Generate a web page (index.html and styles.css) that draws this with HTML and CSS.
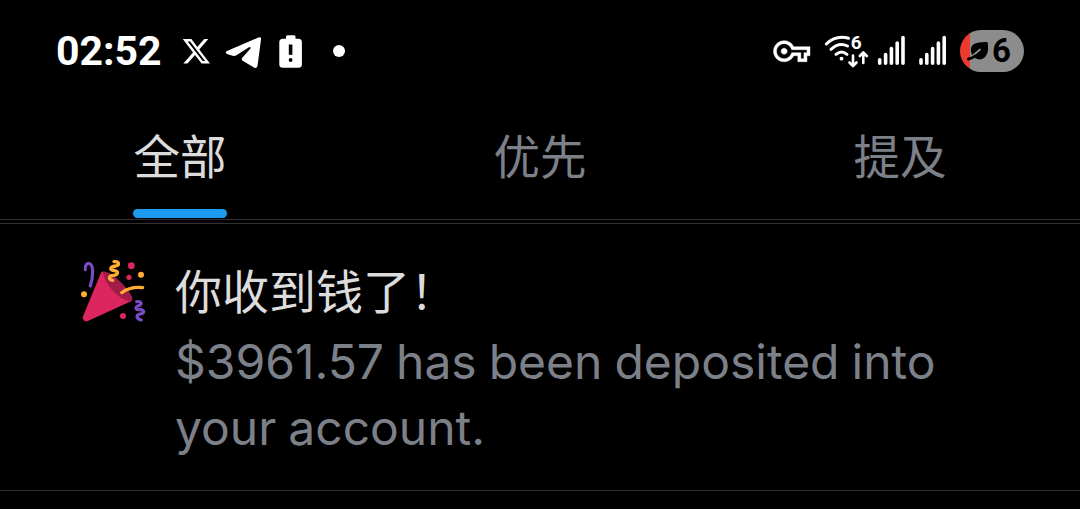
FILE: index.html
```html
<!DOCTYPE html>
<html lang="zh-CN">
<head>
<meta charset="utf-8">
<title>通知</title>
<link rel="stylesheet" href="styles.css">
</head>
<body>
<header class="status">
  <span class="clock">02:52</span>
  <svg width="56" height="60" viewBox="162 20 56 60" fill="#fff"><path transform="translate(181.2 36.2) scale(1.26)" d="M18.244 2.25h3.308l-7.227 8.26 8.502 11.24H16.17l-5.214-6.817L4.99 21.75H1.68l7.73-8.835L1.254 2.25H8.08l4.713 6.231zm-1.161 17.52h1.833L7.084 4.126H5.117z"/></svg>
  <svg width="52" height="60" viewBox="218 20 52 60" fill="#fff"><path d="M227 51 259 37.3Q261.5 36.8 261 39.5L257.5 66Q256.5 69 254 67.5L243 61Q240.8 59.5 242.5 57.5L250.5 48.5Q251 46.5 249 47.3L236 55.5Q234 56.5 231 55.3L227 54Q224.5 52.5 227 51Z"/></svg>
  <svg width="50" height="60" viewBox="270 20 50 60"><rect x="286" y="35.3" width="9.5" height="7" rx="1.5" fill="#fff"/><rect x="279.3" y="38.7" width="22.6" height="29" rx="3.5" fill="#fff"/><path d="M288.8 44.5h3.6v10.3h-3.6z"/><circle cx="290.6" cy="60" r="1.9"/></svg>
  <svg width="40" height="60" viewBox="320 20 40 60" fill="#fff"><circle cx="339" cy="51" r="6"/></svg>
  <div class="system">
    <svg width="53" height="60" viewBox="765 20 53 60" fill="#fff" stroke="#fff" stroke-width=".3"><path transform="translate(773.5 33.2) scale(1.52 1.5)" d="M22 19h-6v-4h-2.68c-1.14 2.42-3.6 4-6.32 4-3.86 0-7-3.14-7-7s3.14-7 7-7c2.72 0 5.17 1.58 6.32 4H24v6h-2v4zm-4-2h2v-4h2v-2H11.94l-.23-.67C11.01 8.34 9.11 7 7 7c-2.76 0-5 2.24-5 5s2.24 5 5 5c2.11 0 4.01-1.34 4.71-3.33l.23-.67H18v4zM7 14c-1.1 0-2-.9-2-2s.9-2 2-2 2 .9 2 2-.9 2-2 2z"/></svg>
    <svg width="54" height="60" viewBox="818 20 54 60" fill="none" stroke="#fff" stroke-width="3" stroke-linecap="round"><path d="M826.3 44Q836 34.8 848.5 38.3M831 49.3Q839 42 847.5 46M836 54.3Q841.5 49.8 847 54.3"/><circle cx="841.5" cy="58.7" r="1.9" fill="#fff" stroke="none"/><path stroke-width="2.6" stroke-linejoin="round" d="M853 55.5V65.5M849.5 62.5 853 66 856.500 62.500M863.300 63V53M859.800 56 863.300 52.500 866.800 56"/><text class="wifi-gen" x="850.800" y="49.300">6</text></svg>
    <svg width="40" height="60" viewBox="872 20 40 60" stroke="#fff" stroke-width="3.6" stroke-linecap="round"><path d="M879.7 59.8V63.2M885.6 54.5V63.2M891.4 48.5V63.2M897.2 43V63.2M903 37.5V63.2"/></svg>
    <svg width="48" height="60" viewBox="912 20 48 60" stroke="#fff" stroke-width="3.6" stroke-linecap="round"><path d="M921 59.8V63.2M926.8 54.5V63.2M932.6 48.5V63.2M938.4 43V63.2M944.2 37.5V63.2"/></svg>
    <div class="battery">
      <svg width="22" height="20" viewBox="0 0 22 20"><path d="M4.5 12.500Q2.500 6 7 3 11 .8 20.500 1 22.500 12 17.500 16.500 13 20 8 17Z"/><path d="M6 14.500 13 8.500" stroke="#8c8c8c" stroke-width="1.800" stroke-linecap="round"/><path d="M1.500 18Q5 17.500 8 15" fill="none" stroke="#000" stroke-width="2.800" stroke-linecap="round"/></svg>
      <span>6</span>
    </div>
  </div>
</header>
<nav class="tabs">
  <div class="tab active">全部</div>
  <div class="tab">优先</div>
  <div class="tab">提及</div>
</nav>
<article class="notice">
  <svg class="popper" width="90" height="85" viewBox="0 0 270 255" fill="none" stroke-linecap="round" stroke-linejoin="round">
    <path fill="#dd2560" d="M93 68 38 202Q39 216 52 214L183 154Q189 151 186 146L108 66Q97 62 93 68Z"/>
    <path fill="#a31c49" d="M99 66Q112 61 139 84 172 112 187 142 187 154 176 154 143 144 119 111 98 82 99 66Z"/>
    <path stroke="#794bc4" stroke-width="9.5" d="M46 59C44 47 51 38 59 41 72 47 69 83 61 108"/>
    <path stroke="#ffad33" stroke-width="10" d="M132 35C149 33 149 45 137 48 117 51 119 61 133 62 147 64 145 74 131 76 115 77 115 88 128 91"/>
    <path stroke="#ffad33" stroke-width="9.5" d="M155 128Q181 109 218 113"/>
    <path stroke="#794bc4" stroke-width="9.5" d="M200 155C215 153 219 163 205 167 192 173 199 180 210 179 226 180 223 190 210 192 197 194 198 207 214 210"/>
    <g fill="#dd2560"><circle cx="184" cy="47" r="10"/><circle cx="177" cy="82" r="8"/><circle cx="159" cy="198" r="9"/></g>
    <g fill="#ffad33"><circle cx="213" cy="74" r="9"/><circle cx="42" cy="133" r="9"/></g>
  </svg>
  <div class="message">
    <h1>你收到钱了！</h1>
    <p>$3961.57 has been deposited into<br>your account.</p>
  </div>
</article>
</body>
</html>
```
FILE: styles.css
```css
* { box-sizing: border-box; }
body { margin: 0; height: 509px; overflow: hidden; background: #000; color: #dcdcdc; font-family: Inter, "Noto Sans CJK SC", sans-serif; }
svg { display: block; flex: none; }
.status { display: flex; height: 102px; padding: 20px 56px 0 56px; }
.clock { width: 106px; font: 700 41px/62px Roboto, sans-serif; color: #fff; white-space: nowrap; }
.system { display: flex; margin-left: auto; }
.wifi-gen { font: 700 19px Roboto, sans-serif; fill: #fff; stroke: none; }
.battery { display: flex; align-items: center; width: 64px; height: 42px; margin-top: 10px; padding-left: 7px; border-radius: 21px; background: linear-gradient(90deg, #ec3b2e 10px, #8c8c8c 10px); color: #000; }
.battery span { margin-left: 3px; font: 700 33px/42px Roboto, sans-serif; }
.tabs { display: flex; height: 122px; border-bottom: 1px solid #2f3133; padding-bottom: 3px; }
.tab { display: flex; flex: 1; justify-content: center; border-bottom: 1px solid #2f3133; font: 400 46.5px/103px "Noto Sans CJK SC", sans-serif; color: #7c8088; }
.active { color: #dcdcdc; }
.active::after { content: ""; width: 94px; height: 9px; margin: 107px 0 0 -94px; border-radius: 5px; background: #1d9bf0; }
.notice { display: flex; height: 267px; padding: 26px 0 0 70px; border-bottom: 1px solid #2f3133; }
.message { padding-left: 15px; }
.message h1 { margin: 0; font: 400 47px/78px "Noto Sans CJK SC", sans-serif; color: #dcdcdc; }
.message p { margin: 1px 0 0; font: 400 48px/66px Inter, sans-serif; word-spacing: -1.5px; color: #7c8088; white-space: nowrap; }
```
